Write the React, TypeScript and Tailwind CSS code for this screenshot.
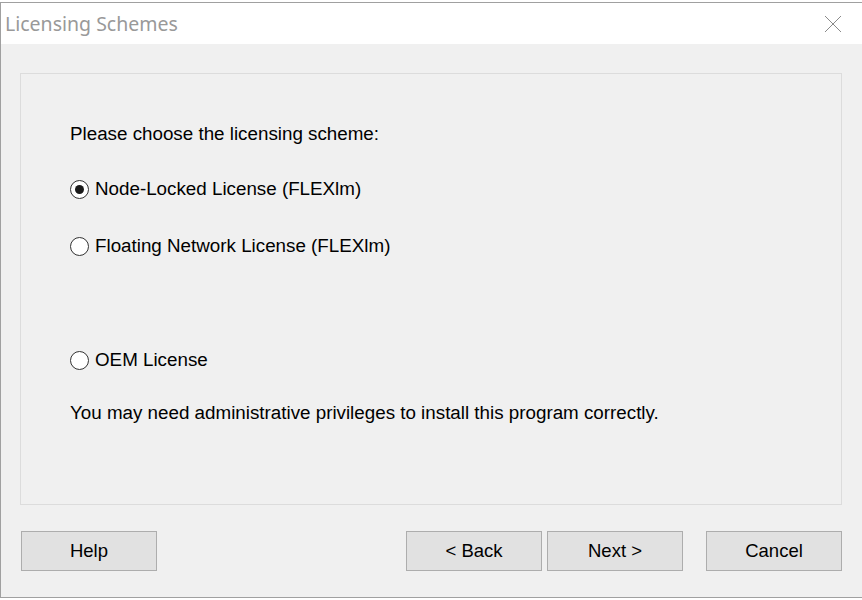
import { useState } from 'react';

const options = [
  { id: 'node', label: 'Node-Locked License (FLEXlm)', mt: 'mt-[33px]' },
  { id: 'floating', label: 'Floating Network License (FLEXlm)', mt: 'mt-[35px]' },
  { id: 'oem', label: 'OEM License', mt: 'mt-[92px]' },
];

function Radio({ checked }: { checked: boolean }) {
  return (
    <span className="w-[19px] h-[19px] rounded-full border border-[#333] bg-white flex items-center justify-center shrink-0">
      {checked && <span className="w-[9px] h-[9px] rounded-full bg-[#1a1a1a]" />}
    </span>
  );
}

function WinButton({ children }: { children: React.ReactNode }) {
  return (
    <button className="w-[136px] h-[40px] bg-[#e1e1e1] border border-[#adadad] text-[18.5px] text-black flex items-center justify-center">
      {children}
    </button>
  );
}

export default function App() {
  const [scheme, setScheme] = useState('node');

  return (
    <div className="w-[862px] h-[600px] bg-white pt-[2px] overflow-hidden font-['Liberation_Sans',Arial,sans-serif]">
      <div className="h-[596px] border-t border-l border-b border-[#a0a0a0] flex flex-col">
        {/* Title bar */}
        <div className="h-[41px] bg-white flex items-center justify-between pl-[4px] pr-[20px]">
          <span className="text-[19.5px] text-[#999] font-['Noto_Sans',sans-serif] leading-none">Licensing Schemes</span>
          <svg width="18" height="18" viewBox="0 0 18 18" className="text-[#8a8a8a]">
            <path d="M1 1 L17 17 M17 1 L1 17" stroke="currentColor" strokeWidth="1" fill="none" />
          </svg>
        </div>

        {/* Body */}
        <div className="flex-1 bg-[#f0f0f0] pl-[19px] pr-[20px] pt-[29px]">
          <div className="h-[432px] border border-[#dcdcdc] pl-[49px] pt-[49px] text-[18.8px] text-black">
            <p className="leading-[22px]">Please choose the licensing scheme:</p>
            {options.map((o) => (
              <label
                key={o.id}
                onClick={() => setScheme(o.id)}
                className={`flex items-center gap-[6px] h-[22px] ${o.mt}`}
              >
                <Radio checked={scheme === o.id} />
                <span className="leading-[22px]">{o.label}</span>
              </label>
            ))}
            <p className="leading-[22px] mt-[31px]">
              You may need administrative privileges to install this program correctly.
            </p>
          </div>

          <div className="flex mt-[26px] ml-[1px]">
            <WinButton>Help</WinButton>
            <div className="ml-auto flex">
              <WinButton>&lt; Back</WinButton>
              <div className="ml-[5px]"><WinButton>Next &gt;</WinButton></div>
              <div className="ml-[23px]"><WinButton>Cancel</WinButton></div>
            </div>
          </div>
        </div>
      </div>
    </div>
  );
}
